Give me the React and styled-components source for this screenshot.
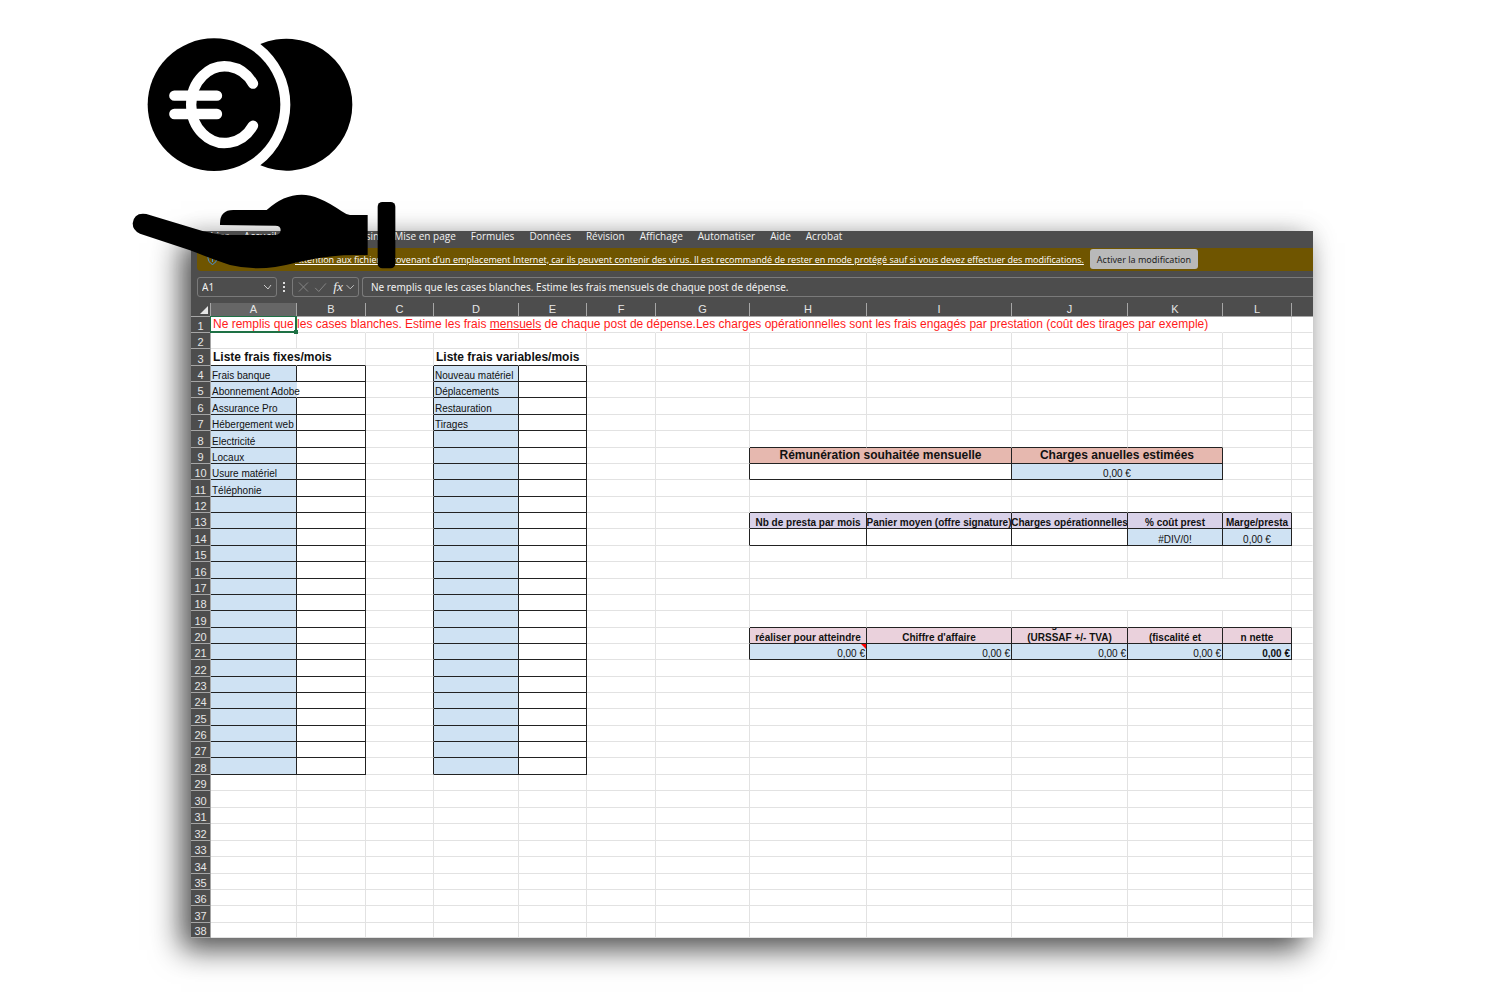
import React, { useState } from 'react';
import styled, { createGlobalStyle } from 'styled-components';

const GlobalStyle = createGlobalStyle`
body {
  margin: 0;
  background: #fff;
}
*, *::before, *::after {
  box-sizing: border-box;
}
`;

const Page = styled.main`
position: relative;
padding: 231px 187px 63px 191px;
font-family: 'Liberation Sans', sans-serif;
`;

const CoinHand = styled.svg`
position: absolute;
left: 120px;
top: 20px;
width: 300px;
height: 260px;
z-index: 1;
pointer-events: none;
`;

const Workbook = styled.section`
background: #fff;
box-shadow: -10px 12px 28px rgba(0, 0, 0, 0.66), 0 0 24px rgba(0, 0, 0, 0.1);
`;

const Chrome = styled.header`
background: #4d4d4d;
color: #f2f2f2;
font-family: 'Noto Sans', sans-serif;
font-size: 10px;
`;

const Tabs = styled.nav`
display: flex;
gap: 15px;
height: 17px;
padding-left: 7px;
font-family: 'Open Sans', sans-serif;
line-height: 11px;
`;

const Tab = styled.a`
color: inherit;
text-decoration: none;
white-space: nowrap;
`;

const Warning = styled.div`
display: flex;
align-items: center;
height: 23px;
margin-left: 6px;
padding: 0 0 1px 10px;
background: #6f5500;
border-bottom-left-radius: 4px;
font-size: 9px;
white-space: nowrap;
`;

const WarningLink = styled.a`
margin: 0 6px 0 77px;
color: #fff;
font-family: 'Open Sans', sans-serif;
text-decoration: underline;
`;

const EnableButton = styled.button`
height: 20px;
padding: 0 7px;
border: 0;
border-radius: 3px;
background: #b9b9b9;
color: #222;
font: inherit;
`;

const FormulaBar = styled.div`
display: flex;
align-items: stretch;
height: 32px;
padding: 6px 0 6px 6px;
`;

const NameBox = styled.label`
display: flex;
align-items: center;
width: 80px;
padding: 0 4px;
border: 1px solid #7a7a7a;
border-radius: 3px;
`;

const BarInput = styled.input`
flex: 1;
min-width: 0;
padding: 0;
border: 0;
outline: 0;
background: transparent;
color: #f2f2f2;
font: inherit;
`;

const Dots = styled.svg`
width: 15px;
height: 20px;
`;

const FormulaTools = styled.svg`
width: 67px;
height: 20px;
border: 1px solid #7a7a7a;
border-radius: 3px;
`;

const FormulaField = styled.label`
display: flex;
flex: 1;
margin-left: 3px;
padding-left: 8px;
border: 1px solid #7a7a7a;
border-right: 0;
border-radius: 3px 0 0 3px;
`;

const Grid = styled.table`
width: 100%;
table-layout: fixed;
border-collapse: separate;
border-spacing: 0;
font-size: 10px;
line-height: 11px;
color: #111;
`;

const HeaderCell = styled.th`
height: 14px;
padding: 0;
border-right: 1px solid #a6a6a6;
border-bottom: 1px solid #a6a6a6;
background: ${(p) => (p.$active ? '#666' : '#4d4d4d')};
color: #e6e6e6;
font-size: 11px;
font-weight: 400;
line-height: 12px;
vertical-align: top;

&:last-child {
  border-right: 0;
}
`;

const RowHeader = styled(HeaderCell)`
height: ${(p) => p.$height}px;
vertical-align: bottom;
`;

const Corner = styled.svg`
display: block;
width: 18px;
height: 12px;
`;

const fills = {
  blue: '#cfe2f3',
  salmon: '#e6b8af',
  purple: '#d9d2e9',
  pink: '#ead1dc',
};

const lines = { dark: '#222', grid: '#e2e2e2', none: 'transparent' };

const Cell = styled.td`
position: ${(p) => (p.$marked ? 'relative' : 'static')};
height: ${(p) => p.$height}px;
padding: 0;
border-right: 1px solid ${(p) => lines[p.$right]};
border-bottom: 1px solid ${(p) => lines[p.$bottom]};
background: ${(p) => fills[p.$fill] || 'none'};
`;

const Content = styled.div`
display: flex;
flex-direction: column;
justify-content: flex-end;
align-items: ${(p) => ({ center: 'center', right: 'flex-end' }[p.$align] || 'flex-start')};
height: ${(p) => p.$height - 1}px;
padding: 0 ${(p) => (p.$align === 'center' ? 0 : 1)}px;
overflow: ${(p) => (p.$clip ? 'hidden' : 'visible')};
font-weight: ${(p) => (p.$bold ? 700 : 400)};
white-space: nowrap;
`;

const Title = styled(Content)`
padding: 0 ${(p) => (p.$align === 'center' ? 0 : 2)}px;
color: ${(p) => (p.$red ? '#ff1a1a' : 'inherit')};
font-size: 12px;
line-height: 15px;
`;

const UpperLine = styled.span`
line-height: 15px;
`;

const Selection = styled.div`
position: absolute;
inset: -1px -1px -1px -1px;
border: 2px solid #1e7145;
border-left-width: 1px;
border-top-width: 1px;

&::after {
  content: '';
  position: absolute;
  right: -3px;
  bottom: -3px;
  width: 4px;
  height: 4px;
  background: #1e7145;
}
`;

const NoteMark = styled.div`
position: absolute;
top: 0;
right: 0;
border-top: 5px solid #f00;
border-left: 5px solid transparent;
`;

const tabNames = ['Fichier', 'Accueil', 'Insertion', 'Dessin', 'Mise en page', 'Formules', 'Données', 'Révision', 'Affichage', 'Automatiser', 'Aide', 'Acrobat'];
const columns = [['A', 86], ['B', 69], ['C', 68], ['D', 85], ['E', 68], ['F', 69], ['G', 94], ['H', 117], ['I', 145], ['J', 116], ['K', 95], ['L', 69]];
const names = columns.map(([name]) => name);
const tallRows = [3, 6, 8, 11, 14, 16, 19, 22, 25, 28, 30, 32, 34, 37];
const rowNumbers = Array.from({ length: 38 }, (_, i) => i + 1);

const rowHeight = (row) => {
  if (row === 38) return 15;
  return tallRows.includes(row) ? 17 : 16;
};

const cells = {
  A1: {
    text: <span>Ne remplis que les cases blanches. Estime les frais <u>mensuels</u> de chaque post de dépense.Les charges opérationnelles sont les frais engagés par prestation (coût des tirages par exemple)</span>,
    title: true, red: true,
  },
  A3: { text: 'Liste frais fixes/mois', title: true, bold: true },
  D3: { text: 'Liste frais variables/mois', title: true, bold: true },
  H9: { text: 'Rémunération souhaitée mensuelle', title: true, bold: true, align: 'center', fill: 'salmon', span: 2, boxed: true },
  J9: { text: 'Charges anuelles estimées', title: true, bold: true, align: 'center', fill: 'salmon', span: 2, boxed: true },
  H10: { span: 2, boxed: true },
  J10: { text: '0,00 €', align: 'center', fill: 'blue', span: 2, boxed: true },
  H17: { span: 5 },
  H18: { span: 5 },
  H14: { boxed: true },
  I14: { boxed: true },
  J14: { boxed: true },
  K14: { text: '#DIV/0!', align: 'center', fill: 'blue', boxed: true },
  L14: { text: '0,00 €', align: 'center', fill: 'blue', boxed: true },
};

['Frais banque', 'Abonnement Adobe', 'Assurance Pro', 'Hébergement web', 'Electricité', 'Locaux', 'Usure matériel', 'Téléphonie']
  .forEach((text, i) => { cells[`A${i + 4}`] = { text }; });
['Nouveau matériel', 'Déplacements', 'Restauration', 'Tirages']
  .forEach((text, i) => { cells[`D${i + 4}`] = { text }; });

for (let row = 4; row <= 28; row += 1) {
  cells[`A${row}`] = { ...cells[`A${row}`], fill: 'blue', boxed: true };
  cells[`B${row}`] = { boxed: true };
  cells[`D${row}`] = { ...cells[`D${row}`], fill: 'blue', boxed: true };
  cells[`E${row}`] = { boxed: true };
}

['Nb de presta par mois', 'Panier moyen (offre signature)', 'Charges opérationnelles', '% coût prest', 'Marge/presta']
  .forEach((text, i) => {
    cells[`${names[i + 7]}13`] = { text, bold: true, align: 'center', fill: 'purple', boxed: true, clip: true };
  });

['réaliser pour atteindre', "Chiffre d'affaire", <><UpperLine>Charges sociales</UpperLine><span>(URSSAF +/- TVA)</span></>, '(fiscalité et', 'n nette']
  .forEach((text, i) => {
    cells[`${names[i + 7]}20`] = { text, bold: true, align: 'center', fill: 'pink', boxed: true, clip: true };
    cells[`${names[i + 7]}21`] = { text: '0,00 €', bold: i === 4, align: 'right', fill: 'blue', boxed: true, note: i === 0 };
  });

// text that runs over its neighbours hides the lines between them
const hidesRight = (col, row) => (
  (row === 1 && col < 11) || (row === 3 && (col === 0 || col === 3)) || (row === 5 && col === 0)
);

const isBoxed = (col, row) => {
  const cell = cells[`${names[col]}${row}`];
  if (cell) return Boolean(cell.boxed);
  const before = cells[`${names[col - 1]}${row}`];
  return Boolean(before && before.span === 2 && before.boxed);
};

const SheetRow = ({ row }) => {
  const height = rowHeight(row);
  const items = [];
  for (let col = 0; col < names.length;) {
    const id = `${names[col]}${row}`;
    const cell = cells[id] || {};
    const span = cell.span || 1;
    const last = col + span - 1;
    const Text = cell.title ? Title : Content;
    let right = isBoxed(last, row) || isBoxed(last + 1, row) ? 'dark' : 'grid';
    if (hidesRight(col, row)) right = 'none';
    const bottom = isBoxed(col, row) || isBoxed(col, row + 1) ? 'dark' : 'grid';
    items.push(
      <Cell key={id} colSpan={span} $height={height} $right={right} $bottom={bottom} $fill={cell.fill} $marked={cell.note || id === 'A1'}>
        {cell.text && (
          <Text $height={height} $align={cell.align} $bold={cell.bold} $red={cell.red} $clip={cell.clip}>
            {cell.text}
          </Text>
        )}
        {id === 'A1' && <Selection />}
        {cell.note && <NoteMark />}
      </Cell>
    );
    col += span;
  }
  return (
    <tr>
      <RowHeader scope="row" $height={height}>{row}</RowHeader>
      {items}
      <Cell $height={height} $right="none" $bottom="grid" />
    </tr>
  );
};

const CoinHandIcon = () => (
  <CoinHand viewBox="0 0 900 780" aria-hidden="true">
    <circle cx="282" cy="254" r="199" />
    <path d="M421 72A198 198 0 1 1 421 436A229 229 0 0 0 421 72Z" />
    <g fill="none" stroke="#fff" strokeWidth="31" strokeLinecap="round">
      <path d="M399 191A101 115 0 1 0 399 317" />
      <path d="M163 227H291M163 282H291" />
    </g>
    <path d="M79 582L250 634Q290 645 330 645H466Q482 643 482 630Q482 617 466 617L300 615Q298 570 340 570H440Q490 524 545 524Q595 524 665 574Q677 583 690 585H743V705L670 706Q610 709 520 730Q420 757 330 735Q290 722 210 691L60 641Q38 632 38 610Q42 576 79 582Z" />
    <rect x="773" y="546" width="53" height="199" rx="14" />
  </CoinHand>
);

const App = () => {
  const [cellName, setCellName] = useState('A1');
  const [formula, setFormula] = useState('Ne remplis que les cases blanches. Estime les frais mensuels de chaque post de dépense.');

  return (
    <>
      <GlobalStyle />
      <Page>
        <CoinHandIcon />
        <Workbook>
          <Chrome>
            <Tabs>
              {tabNames.map((name) => <Tab key={name} href="#">{name}</Tab>)}
            </Tabs>
            <Warning>
              <svg width="11" height="11" viewBox="0 0 22 22" fill="none" stroke="#4a90d9" strokeWidth="2">
                <path d="M2 4Q8 4 11 1Q14 4 20 4Q21 16 11 21Q1 16 2 4Z" />
                <path d="M11 10v6M11 6v2" />
              </svg>
              <WarningLink href="#">Attention aux fichiers provenant d’un emplacement Internet, car ils peuvent contenir des virus. Il est recommandé de rester en mode protégé sauf si vous devez effectuer des modifications.</WarningLink>
              <EnableButton type="button">Activer la modification</EnableButton>
            </Warning>
            <FormulaBar>
              <NameBox>
                <BarInput aria-label="Zone Nom" value={cellName} onChange={(e) => setCellName(e.target.value)} />
                <svg width="9" height="6" viewBox="0 0 9 6" fill="none" stroke="#ccc">
                  <path d="M1 1l4 4 3-4" />
                </svg>
              </NameBox>
              <Dots viewBox="0 0 15 20" fill="#ddd">
                <path d="M6 5h2v2H6zM6 9h2v2H6zM6 13h2v2H6z" />
              </Dots>
              <FormulaTools viewBox="0 0 67 20" fill="none" stroke="#8a8a8a">
                <path d="M4 5l10 10M14 5L4 15M22 11l4 4 8-9" />
                <path d="M57 8l4 4 4-4" stroke="#ccc" />
                <text x="42" y="14" fill="#eee" stroke="none" fontFamily="Liberation Serif, serif" fontStyle="italic" fontSize="15">fx</text>
              </FormulaTools>
              <FormulaField>
                <BarInput aria-label="Barre de formule" value={formula} onChange={(e) => setFormula(e.target.value)} />
              </FormulaField>
            </FormulaBar>
          </Chrome>
          <Grid>
            <colgroup>
              <col style={{ width: 20 }} />
              {columns.map(([name, width]) => <col key={name} style={{ width }} />)}
              <col />
            </colgroup>
            <thead>
              <tr>
                <HeaderCell aria-label="Tout sélectionner">
                  <Corner viewBox="0 0 18 12" fill="#e6e6e6"><path d="M17 3v8H9z" /></Corner>
                </HeaderCell>
                {names.map((name) => <HeaderCell key={name} scope="col" $active={name === 'A'}>{name}</HeaderCell>)}
                <HeaderCell />
              </tr>
            </thead>
            <tbody>
              {rowNumbers.map((row) => <SheetRow key={row} row={row} />)}
            </tbody>
          </Grid>
        </Workbook>
      </Page>
    </>
  );
};

export default App;
